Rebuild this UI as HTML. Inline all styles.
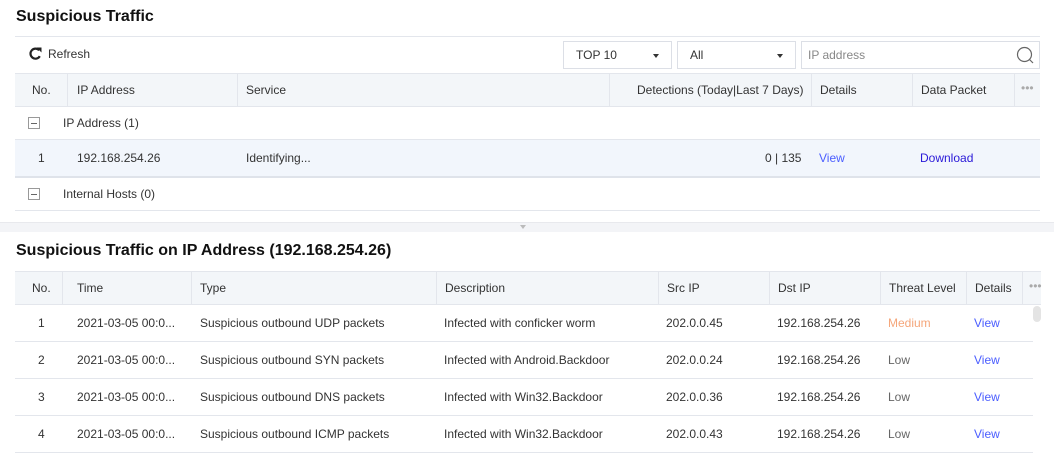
<!DOCTYPE html>
<html><head><meta charset="utf-8"><style>
*{box-sizing:border-box;margin:0;padding:0}
body{width:1054px;height:453px;overflow:hidden;background:#fff;font-family:"Liberation Sans",sans-serif;font-size:12px;color:#333;position:relative}
.a{position:absolute}
h1{position:absolute;font-size:16px;font-weight:bold;color:#111;left:16px}
.hl{position:absolute;height:1px;background:#e3e6ec}
.hdr{position:absolute;background:#f3f6f9;border-top:1px solid #e3e6ec;border-bottom:1px solid #e3e6ec}
.vl{position:absolute;width:1px;background:#e3e6ec}
.t{position:absolute;white-space:nowrap;line-height:14px}
.sel{position:absolute;border:1px solid #dcdfe6;height:28px;top:41px;background:#fff}
.box{position:absolute;width:12px;height:12px;border:1px solid #999;left:28px}
.box:after{content:"";position:absolute;left:2px;top:5px;width:6px;height:1px;background:#666}
.blue{color:#4a5dff}
.arr{position:absolute;top:12px;border:3.5px solid transparent;border-top:4px solid #333}
</style></head><body>
<h1 style="top:8px">Suspicious Traffic</h1>
<div class="hl" style="left:15px;width:1025px;top:36px"></div>
<svg class="a" style="left:28px;top:46px" width="15" height="15" viewBox="0 0 15 15"><path d="M11.2 4.3A5 5 0 1 0 11.8 10.2" fill="none" stroke="#222" stroke-width="2.2"/><path d="M8.5 1.5h5v5z" fill="#222"/></svg>
<div class="t" style="left:48px;top:47px">Refresh</div>
<div class="sel" style="left:563px;width:109px"><span class="t" style="left:12px;top:6px">TOP 10</span><span class="arr" style="left:89px"></span></div>
<div class="sel" style="left:677px;width:119px"><span class="t" style="left:12px;top:6px">All</span><span class="arr" style="left:99px"></span></div>
<div class="sel" style="left:801px;width:239px"><span class="t" style="left:6px;top:6px;color:#888">IP address</span><svg class="a" style="left:214px;top:4px" width="19" height="19"><circle cx="8.5" cy="8.5" r="7" fill="none" stroke="#666" stroke-width="1.2"/><path d="M13.5 13.5L17 17" stroke="#666" stroke-width="1.2"/></svg></div>

<div class="hdr" style="left:15px;width:1025px;top:73px;height:34px"></div>
<div class="vl" style="left:67px;top:74px;height:32px"></div>
<div class="vl" style="left:237px;top:74px;height:32px"></div>
<div class="vl" style="left:609px;top:74px;height:32px"></div>
<div class="vl" style="left:811px;top:74px;height:32px"></div>
<div class="vl" style="left:912px;top:74px;height:32px"></div>
<div class="vl" style="left:1014px;top:74px;height:32px"></div>
<div class="t" style="left:32px;top:83px">No.</div>
<div class="t" style="left:77px;top:83px">IP Address</div>
<div class="t" style="left:246px;top:83px">Service</div>
<div class="t" style="left:637px;top:83px">Detections (Today|Last 7 Days)</div>
<div class="t" style="left:820px;top:83px">Details</div>
<div class="t" style="left:921px;top:83px">Data Packet</div>
<div class="t" style="left:1021px;top:81px;color:#aaa">•••</div>

<div class="box" style="top:117px"></div>
<div class="t" style="left:63px;top:116px">IP Address (1)</div>
<div class="a" style="left:15px;width:1025px;top:139px;height:39px;background:#f2f6fc;border-top:1px solid #e3e6ec;border-bottom:2px solid #dfe3ea"></div>
<div class="t" style="left:38px;top:151px">1</div>
<div class="t" style="left:77px;top:151px">192.168.254.26</div>
<div class="t" style="left:246px;top:151px">Identifying...</div>
<div class="t" style="left:765px;top:151px">0 | 135</div>
<div class="t blue" style="left:819px;top:151px">View</div>
<div class="t" style="left:920px;top:151px;color:#2a19d8">Download</div>
<div class="box" style="top:188px"></div>
<div class="t" style="left:63px;top:187px">Internal Hosts (0)</div>
<div class="hl" style="left:15px;width:1025px;top:210px"></div>

<div class="a" style="left:0;width:1054px;top:222px;height:10px;background:#f3f4f7;border-top:1px solid #e8e9ed"></div>
<div class="a" style="left:520px;top:225px;border:3px solid transparent;border-top:4px solid #bbb"></div>

<h1 style="top:242px">Suspicious Traffic on IP Address (192.168.254.26)</h1>
<div class="hdr" style="left:15px;width:1026px;top:271px;height:34px"></div>
<div class="vl" style="left:62px;top:272px;height:32px"></div>
<div class="vl" style="left:191px;top:272px;height:32px"></div>
<div class="vl" style="left:436px;top:272px;height:32px"></div>
<div class="vl" style="left:658px;top:272px;height:32px"></div>
<div class="vl" style="left:769px;top:272px;height:32px"></div>
<div class="vl" style="left:880px;top:272px;height:32px"></div>
<div class="vl" style="left:966px;top:272px;height:32px"></div>
<div class="vl" style="left:1022px;top:272px;height:32px"></div>
<div class="t" style="left:32px;top:281px">No.</div>
<div class="t" style="left:77px;top:281px">Time</div>
<div class="t" style="left:200px;top:281px">Type</div>
<div class="t" style="left:445px;top:281px">Description</div>
<div class="t" style="left:667px;top:281px">Src IP</div>
<div class="t" style="left:778px;top:281px">Dst IP</div>
<div class="t" style="left:889px;top:281px">Threat Level</div>
<div class="t" style="left:975px;top:281px">Details</div>
<div class="t" style="left:1029px;top:279px;color:#aaa">•••</div>
<div class="a" style="left:1033px;top:306px;width:8px;height:16px;border-radius:4px;background:#e4e4e4"></div>

<div class="t" style="left:38px;top:316px">1</div><div class="t" style="left:77px;top:316px">2021-03-05 00:0...</div><div class="t" style="left:200px;top:316px">Suspicious outbound UDP packets</div><div class="t" style="left:444px;top:316px">Infected with conficker worm</div><div class="t" style="left:666px;top:316px">202.0.0.45</div><div class="t" style="left:777px;top:316px">192.168.254.26</div><div class="t" style="left:888px;top:316px;color:#f5a67a">Medium</div><div class="t blue" style="left:974px;top:316px">View</div>
<div class="hl" style="left:15px;width:1018px;top:341px"></div>
<div class="t" style="left:38px;top:353px">2</div><div class="t" style="left:77px;top:353px">2021-03-05 00:0...</div><div class="t" style="left:200px;top:353px">Suspicious outbound SYN packets</div><div class="t" style="left:444px;top:353px">Infected with Android.Backdoor</div><div class="t" style="left:666px;top:353px">202.0.0.24</div><div class="t" style="left:777px;top:353px">192.168.254.26</div><div class="t" style="left:888px;top:353px;color:#666">Low</div><div class="t blue" style="left:974px;top:353px">View</div>
<div class="hl" style="left:15px;width:1018px;top:378px"></div>
<div class="t" style="left:38px;top:390px">3</div><div class="t" style="left:77px;top:390px">2021-03-05 00:0...</div><div class="t" style="left:200px;top:390px">Suspicious outbound DNS packets</div><div class="t" style="left:444px;top:390px">Infected with Win32.Backdoor</div><div class="t" style="left:666px;top:390px">202.0.0.36</div><div class="t" style="left:777px;top:390px">192.168.254.26</div><div class="t" style="left:888px;top:390px;color:#666">Low</div><div class="t blue" style="left:974px;top:390px">View</div>
<div class="hl" style="left:15px;width:1018px;top:415px"></div>
<div class="t" style="left:38px;top:427px">4</div><div class="t" style="left:77px;top:427px">2021-03-05 00:0...</div><div class="t" style="left:200px;top:427px">Suspicious outbound ICMP packets</div><div class="t" style="left:444px;top:427px">Infected with Win32.Backdoor</div><div class="t" style="left:666px;top:427px">202.0.0.43</div><div class="t" style="left:777px;top:427px">192.168.254.26</div><div class="t" style="left:888px;top:427px;color:#666">Low</div><div class="t blue" style="left:974px;top:427px">View</div>
<div class="hl" style="left:15px;width:1018px;top:452px"></div>
</body></html>
